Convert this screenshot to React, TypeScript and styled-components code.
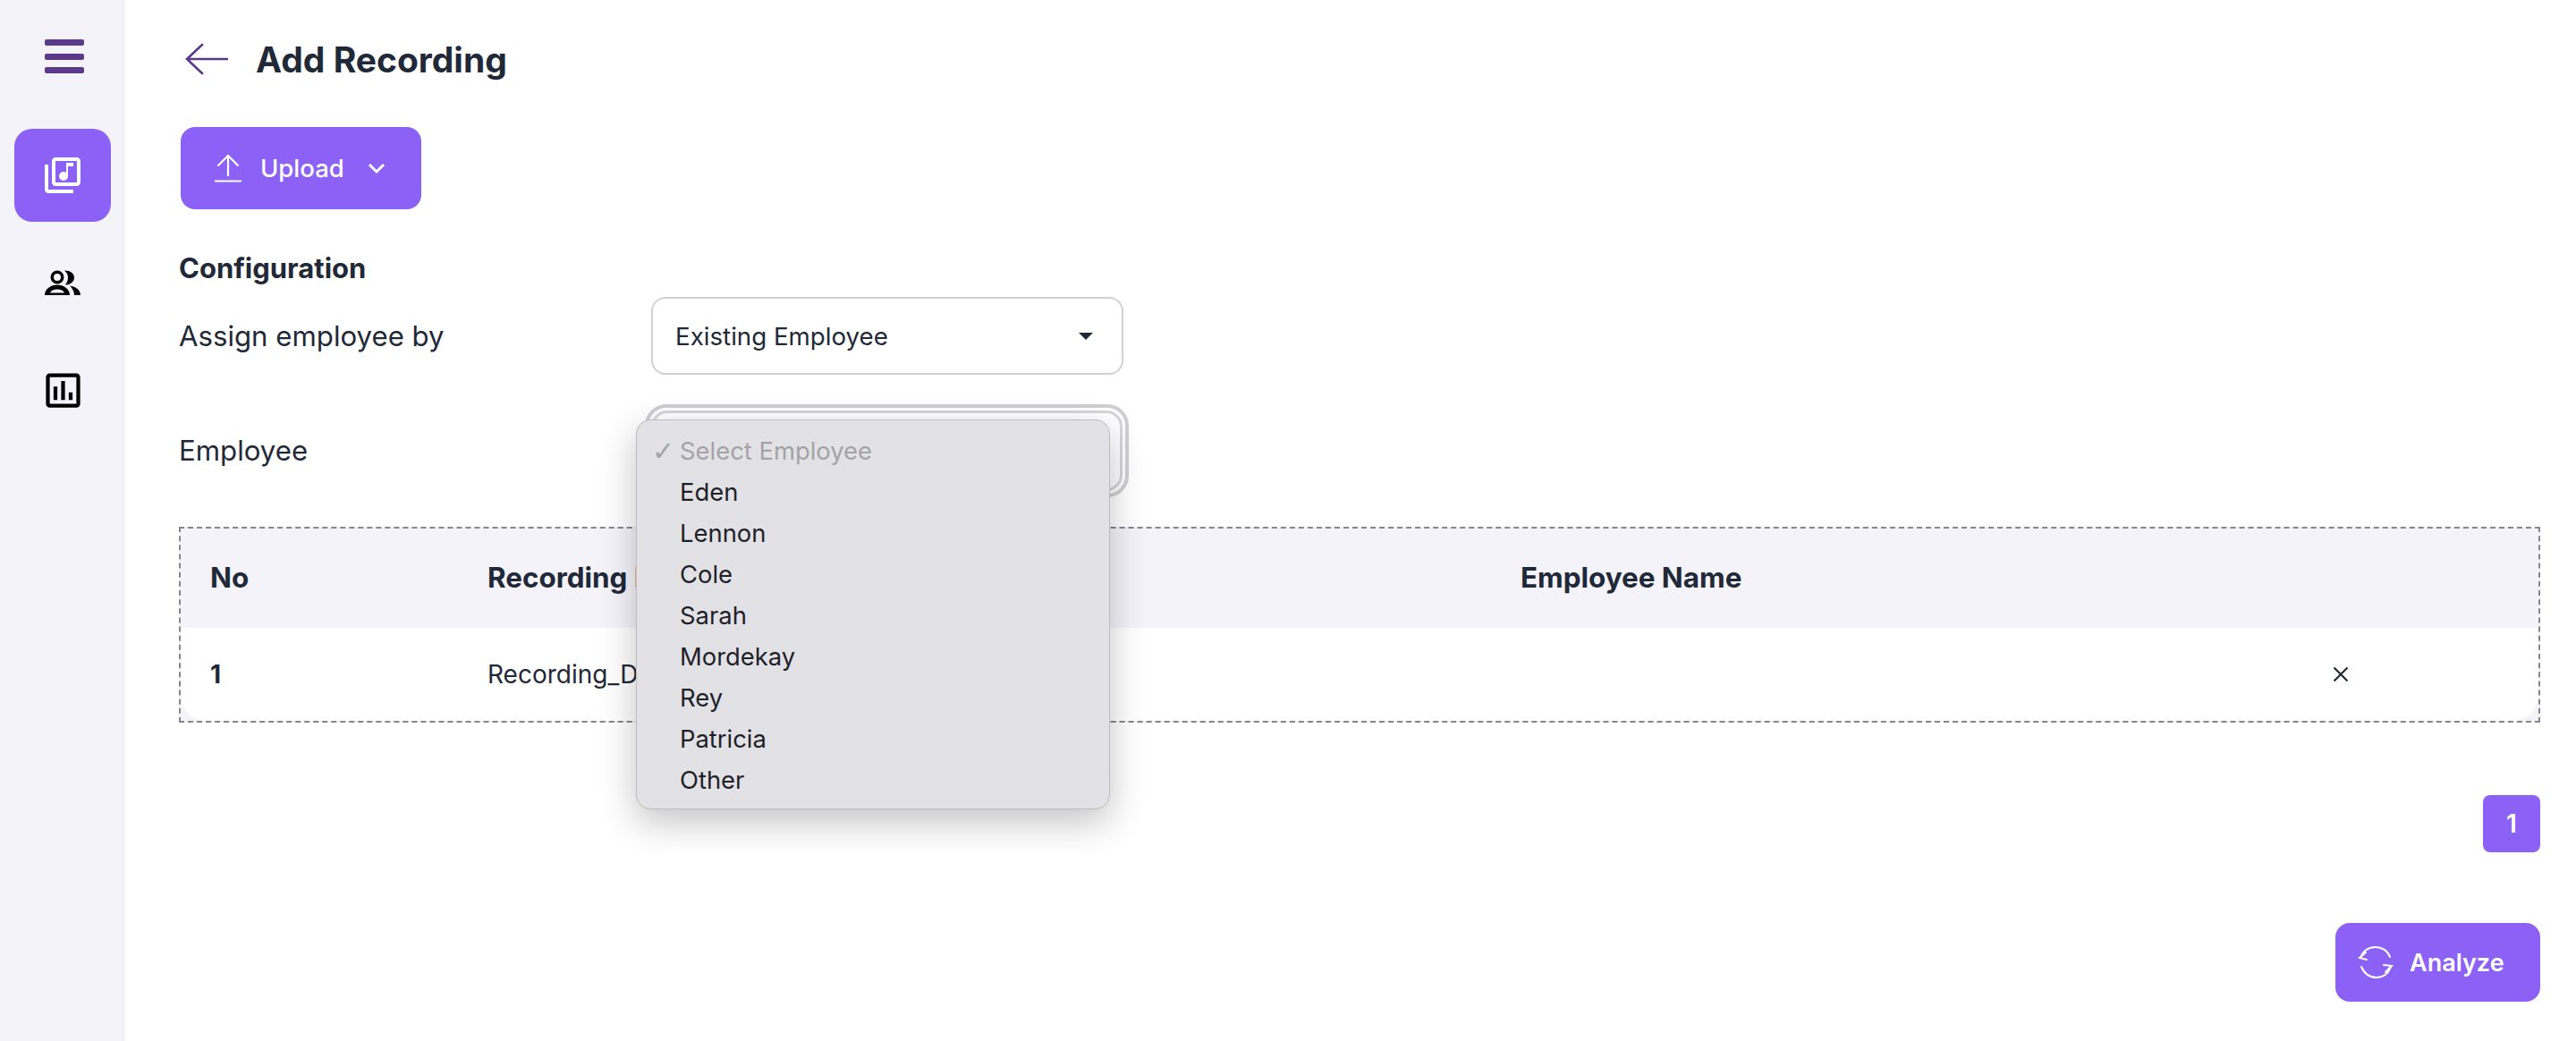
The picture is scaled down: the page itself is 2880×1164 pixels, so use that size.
import React from "react";
import styled, { createGlobalStyle } from "styled-components";
import { MdOutlineLibraryMusic, MdOutlineInsertChart } from "react-icons/md";

const Global = createGlobalStyle`
  html, body { margin: 0; padding: 0; background: #fff; }
  body { font-family: "Inter", "Liberation Sans", sans-serif; color: #1f2937; }
`;

const Shell = styled.div`
  display: flex;
  width: 2880px;
  height: 1164px;
  overflow: hidden;
`;

const Sidebar = styled.nav`
  width: 140px;
  flex: none;
  background: #f4f3fa;
  display: flex;
  flex-direction: column;
  align-items: center;
  padding-top: 44px;
  box-sizing: border-box;
`;

const MenuBars = styled.div`
  width: 44px;
  height: 38px;
  margin-bottom: 62px;
  margin-left: 3px;
  display: flex;
  flex-direction: column;
  justify-content: space-between;
  & > i {
    display: block;
    height: 7px;
    border-radius: 2px;
    background: #5b3a8c;
  }
`;

const NavTile = styled.div<{ $active?: boolean }>`
  width: 108px;
  height: 104px;
  border-radius: 20px;
  display: flex;
  align-items: center;
  justify-content: center;
  margin-bottom: 16px;
  background: ${(p) => (p.$active ? "#8c61f6" : "transparent")};
  color: ${(p) => (p.$active ? "#fff" : "#000")};
  font-size: 48px;
`;

const ChartTile = styled(NavTile)`
  font-size: 51px;
`;

const Main = styled.main`
  flex: 1;
  padding: 0 40px 0 60px;
  display: flex;
  flex-direction: column;
  min-width: 0;
`;

const Header = styled.header`
  display: flex;
  align-items: center;
  height: 66px;
  margin-top: 33px;
  padding-left: 7px;
  gap: 31px;
`;

const Title = styled.h1`
  margin: 0;
  font-size: 39px;
  line-height: 1;
  font-weight: 700;
  color: #1f2937;
`;

const PurpleButton = styled.button`
  border: 0;
  background: #8c61f6;
  color: #fff;
  font-family: inherit;
  display: inline-flex;
  align-items: center;
  font-weight: 500;
  font-size: 27.5px;
`;

const UploadButton = styled(PurpleButton)`
  width: 269px;
  height: 92px;
  border-radius: 16px;
  margin: 43px 0 0 2px;
  padding: 0 0 0 37px;
  gap: 20px;
`;

const ConfigTitle = styled.h2`
  margin: 48px 0 0;
  font-size: 31px;
  line-height: 36px;
  font-weight: 700;
`;

const FieldRow = styled.div<{ $h: number; $mt: number }>`
  display: flex;
  align-items: center;
  height: ${(p) => p.$h}px;
  margin-top: ${(p) => p.$mt}px;
  position: relative;
`;

const Label = styled.label`
  width: 528px;
  font-size: 31.2px;
  font-weight: 400;
  color: #1f2937;
`;

const SelectBox = styled.div`
  width: 528px;
  height: 87px;
  box-sizing: border-box;
  border: 2px solid #d1d1d6;
  border-radius: 16px;
  background: #fff;
  display: flex;
  align-items: center;
  justify-content: space-between;
  padding: 0 32px 0 25px;
  font-size: 27.7px;
`;

const Caret = styled.span`
  width: 0;
  height: 0;
  border-left: 8px solid transparent;
  border-right: 8px solid transparent;
  border-top: 8px solid #1f2937;
`;

const FocusRing = styled.div`
  margin-left: -7px;
  width: 541px;
  height: 104px;
  box-sizing: border-box;
  border: 4px solid #cfcfd3;
  border-radius: 24px;
  padding: 3px;
  background: #fff;
  & > div {
    height: 100%;
    box-sizing: border-box;
    border: 3px solid #d6d6da;
    border-radius: 18px;
  }
`;

const Dropdown = styled.ul`
  position: absolute;
  left: 511px;
  top: 17px;
  width: 530px;
  height: 436px;
  margin: 0;
  padding: 11px 0 0;
  list-style: none;
  box-sizing: border-box;
  background: #e2e1e6;
  border: 1px solid #bdbdc1;
  border-radius: 16px;
  box-shadow: 0 14px 40px rgba(0, 0, 0, 0.24);
  z-index: 5;
`;

const Option = styled.li<{ $muted?: boolean }>`
  height: 46px;
  line-height: 46px;
  padding-left: 48px;
  font-size: 27.4px;
  position: relative;
  color: ${(p) => (p.$muted ? "#a3a3a8" : "#1e2128")};
`;

const Check = styled.span`
  position: absolute;
  left: 17px;
  top: 1px;
  font-size: 30px;
  font-family: "DejaVu Sans", sans-serif;
`;

const TableWrap = styled.section`
  margin-top: 33px;
  height: 219px;
  box-sizing: border-box;
  border: 2px dashed #85858a;
  background: #f4f3fa;
  display: flex;
  flex-direction: column;
`;

const Row = styled.div`
  display: grid;
  grid-template-columns: 310px 1155px 1fr 230px;
  align-items: center;
  padding-left: 33px;
`;

const HeadRow = styled(Row)`
  height: 111px;
  padding-bottom: 2px;
  box-sizing: border-box;
  font-size: 31.4px;
  font-weight: 700;
`;

const BodyRow = styled(Row)`
  flex: 1;
  background: #fff;
  border-bottom-right-radius: 28px;
  border-bottom-left-radius: 28px;
  font-size: 28px;
`;

const NoCell = styled.span`
  font-weight: 700;
`;

const Pager = styled.div`
  display: flex;
  justify-content: flex-end;
  margin-top: 81px;
`;

const PageButton = styled(PurpleButton)`
  width: 64px;
  height: 64px;
  border-radius: 8px;
  justify-content: center;
  font-size: 28px;
  font-weight: 600;
`;

const Footer = styled.div`
  display: flex;
  justify-content: flex-end;
  margin-top: 79px;
`;

const AnalyzeButton = styled(PurpleButton)`
  width: 229px;
  height: 88px;
  border-radius: 16px;
  padding: 0 0 0 25px;
  gap: 18px;
  font-size: 27px;
  font-weight: 600;
`;

const UploadIcon = () => (
  <svg width="32" height="32" viewBox="0 0 32 32" fill="none" stroke="#fff" strokeWidth="2.2">
    <path d="M1 30.5h30M16 25V2M4.5 13.5 16 2l11.5 11.5" />
  </svg>
);

const Chevron = () => (
  <svg width="20" height="14" viewBox="0 0 20 14" fill="none" stroke="#fff" strokeWidth="3" style={{ marginLeft: 6 }}>
    <path d="M2 3l8 8 8-8" />
  </svg>
);

const BackArrow = () => (
  <svg width="48" height="36" viewBox="0 0 48 36" fill="none" stroke="#5b3a8c" strokeWidth="2.6" strokeLinecap="round">
    <path d="M47 18H2M19 2 2 18l17 16" />
  </svg>
);

const CloseIcon = () => (
  <svg width="18" height="18" viewBox="0 0 18 18" fill="none" stroke="#1f2937" strokeWidth="2.2">
    <path d="M1.500 1.500l15 15M16.500 1.500l-15 15" />
  </svg>
);

const SyncIcon = () => (
  <svg width="40" height="36" viewBox="0 0 40 36" fill="none" stroke="#fff" strokeWidth="2" strokeLinecap="round">
    <path d="M36 12C33.500 5 27 1 20 1 12 1 6 5 3 13" />
    <path d="M4 23c3 7 9 12 17 12 8 0 13-4 16-12" />
    <path d="M9 7 2 13l8 2M31 29l7-7-9-1" />
  </svg>
);

const PeopleIcon = () => (
  <svg width="40" height="28" viewBox="0 0 40 28" fill="#000" fillRule="evenodd">
    <path d="M14 0.500a7.500 7.500 0 1 0 0 15 7.500 7.500 0 0 0 0-15Zm0 3.500a4 4 0 1 1 0 8 4 4 0 0 1 0-8Z" />
    <path d="M22 0.500C29 0.500 33 4 33 8.500C33 13 28 17 23 16.500C25 14 26 11 26 8.500C26 5.500 25 3 22 0.500Z" />
    <path d="M0 28C0 21 7 16.500 14 16.500S28 21 28 28ZM6 25.500h16C21 23 18 21.500 14 21.500S7 23 6 25.500Z" />
    <path d="M28 17.500c7 1 12 5 12 10.500h-7c0-4-2-7.500-5-10.500Z" />
  </svg>
);

const employees = ["Eden", "Lennon", "Cole", "Sarah", "Mordekay", "Rey", "Patricia", "Other"];

export default function App() {
  return (
    <Shell>
      <Global />
      <Sidebar>
        <MenuBars>
          <i />
          <i />
          <i />
        </MenuBars>
        <NavTile $active>
          <MdOutlineLibraryMusic />
        </NavTile>
        <NavTile>
          <PeopleIcon />
        </NavTile>
        <ChartTile>
          <MdOutlineInsertChart />
        </ChartTile>
      </Sidebar>
      <Main>
        <Header>
          <BackArrow />
          <Title>Add Recording</Title>
        </Header>
        <div>
          <UploadButton>
            <UploadIcon />
            <span>Upload</span>
            <Chevron />
          </UploadButton>
        </div>
        <ConfigTitle>Configuration</ConfigTitle>
        <FieldRow $h={87} $mt={14}>
          <Label>Assign employee by</Label>
          <SelectBox>
            Existing Employee
            <Caret />
          </SelectBox>
        </FieldRow>
        <FieldRow $h={104} $mt={33}>
          <Label>Employee</Label>
          <FocusRing>
            <div />
          </FocusRing>
          <Dropdown>
            <Option $muted>
              <Check>✓</Check>
              Select Employee
            </Option>
            {employees.map((e) => (
              <Option key={e}>{e}</Option>
            ))}
          </Dropdown>
        </FieldRow>
        <TableWrap>
          <HeadRow>
            <span>No</span>
            <span>Recording Name</span>
            <span>Employee Name</span>
            <span />
          </HeadRow>
          <BodyRow>
            <NoCell>1</NoCell>
            <span>Recording_Demo.mp3</span>
            <span />
            <CloseIcon />
          </BodyRow>
        </TableWrap>
        <Pager>
          <PageButton>1</PageButton>
        </Pager>
        <Footer>
          <AnalyzeButton>
            <SyncIcon />
            Analyze
          </AnalyzeButton>
        </Footer>
      </Main>
    </Shell>
  );
}
